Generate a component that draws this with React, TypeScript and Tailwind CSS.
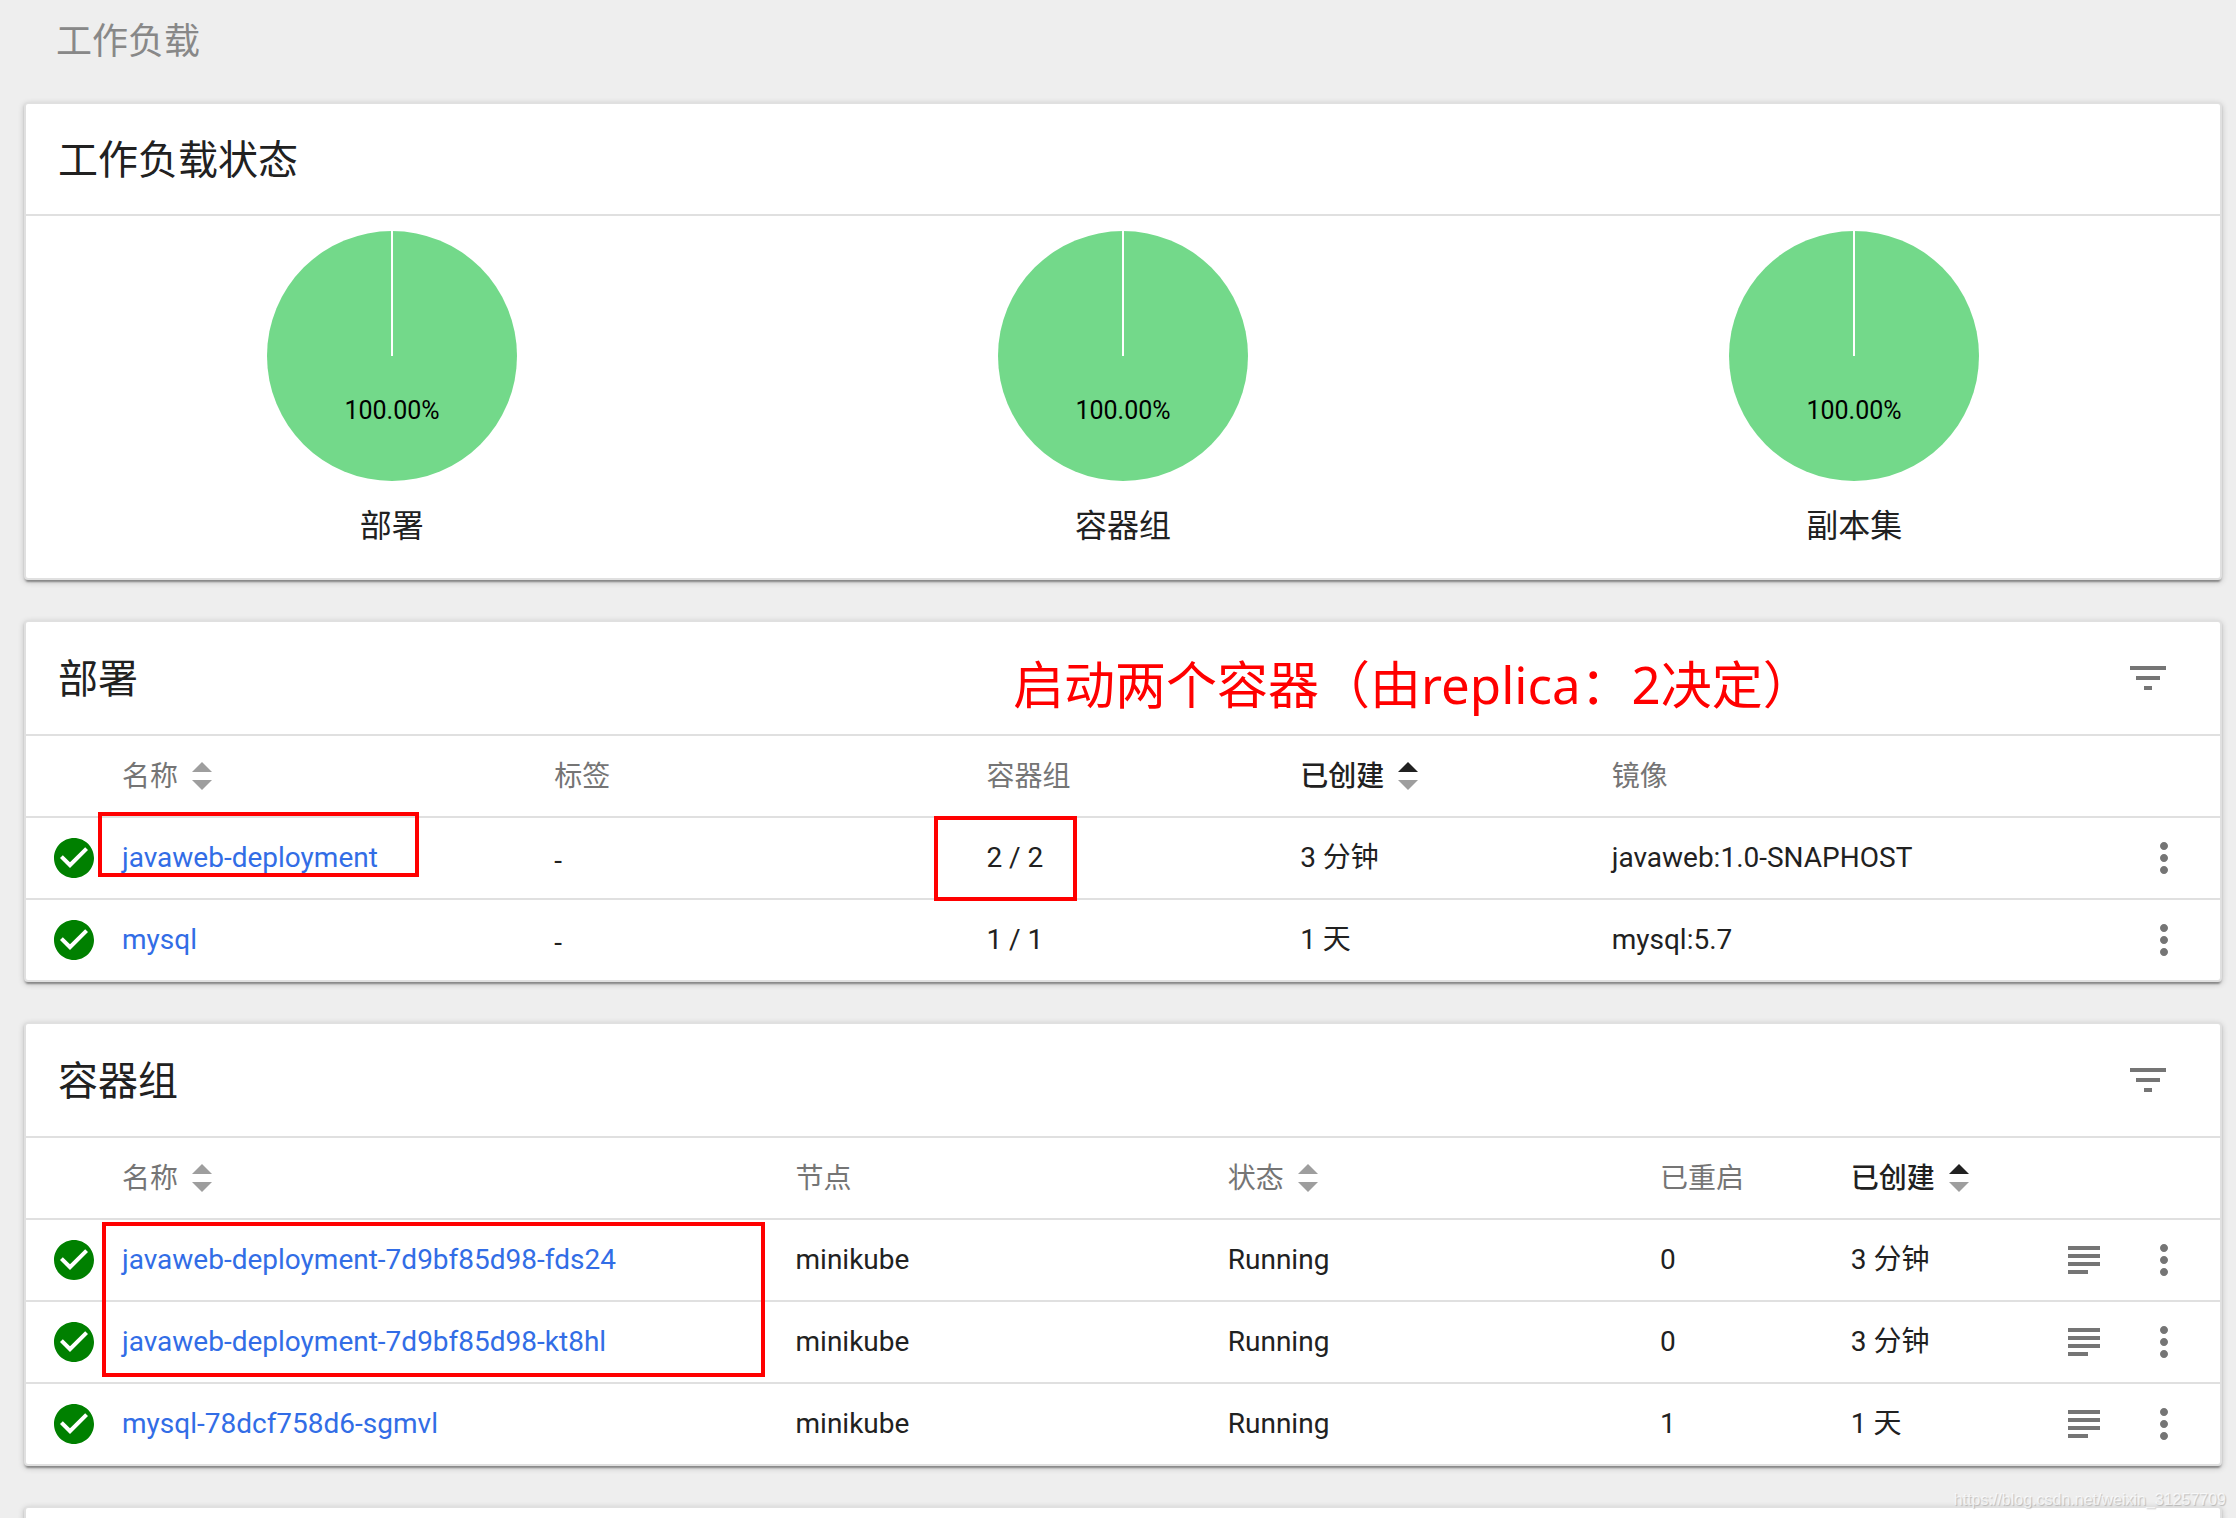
import React from 'react';
import { MdCheckCircle, MdFilterList, MdMoreVert, MdSubject } from 'react-icons/md';

const charts = ['部署', '容器组', '副本集'];

const deployments = [
  { name: 'javaweb-deployment', labels: '-', pods: '2 / 2', created: '3 分钟', image: 'javaweb:1.0-SNAPHOST' },
  { name: 'mysql', labels: '-', pods: '1 / 1', created: '1 天', image: 'mysql:5.7' },
];

const pods = [
  { name: 'javaweb-deployment-7d9bf85d98-fds24', node: 'minikube', status: 'Running', restarts: 0, created: '3 分钟' },
  { name: 'javaweb-deployment-7d9bf85d98-kt8hl', node: 'minikube', status: 'Running', restarts: 0, created: '3 分钟' },
  { name: 'mysql-78dcf758d6-sgmvl', node: 'minikube', status: 'Running', restarts: 1, created: '1 天' },
];

const Card = ({ children }: { children?: React.ReactNode }) => (
  <section className="relative min-h-16 rounded border-2 border-[#e0e0e0] bg-white shadow-[0_2px_6px_rgba(0,0,0,0.2),0_2px_2px_rgba(0,0,0,0.14),0_4px_2px_-2px_rgba(0,0,0,0.24)]">
    {children}
  </section>
);

const CardHeader = ({ title }: { title: string }) => (
  <div className="flex h-28 items-center justify-between pr-12 pl-8">
    <h2 className="pt-1 text-[40px] leading-[48px]">{title}</h2>
    <button type="button" aria-label="过滤" className="text-[#757575]">
      <MdFilterList size={48} />
    </button>
  </div>
);

const SortArrows = ({ active }: { active?: boolean }) => (
  <svg width="20" height="28" viewBox="0 0 20 28" aria-hidden="true">
    <path d="M0 10L10 0l10 10z" fill={active ? '#212121' : '#9e9e9e'} />
    <path d="M0 18l10 10 10-10z" fill="#9e9e9e" />
  </svg>
);

const Th = ({ label, width, sort, active }: {
  label: string;
  width?: string;
  sort?: boolean;
  active?: boolean;
}) => (
  <th scope="col" className={`p-0 text-left ${width ?? ''} ${active ? 'font-medium' : 'font-normal text-[#757575]'}`}>
    {sort ? (
      <button type="button" className="flex items-center gap-3.5">
        <span className="pt-0.5">{label}</span>
        <SortArrows active={active} />
      </button>
    ) : (
      <span className="block pt-0.5">{label}</span>
    )}
  </th>
);

const StatusCell = () => (
  <td className="p-0 pl-6 text-[#008000]">
    <MdCheckCircle size={48} />
  </td>
);

const NameCell = ({ name }: { name: string }) => (
  <td className="p-0">
    <a href="#" className="text-[#326de6]">{name}</a>
  </td>
);

const MenuCell = () => (
  <td className="p-0 pl-4 text-[#757575]">
    <button type="button" aria-label="操作" className="block">
      <MdMoreVert size={48} />
    </button>
  </td>
);

const Pie = ({ label }: { label: string }) => (
  <div className="flex flex-col items-center pt-[15px] pb-7">
    <svg width="250" height="250" viewBox="0 0 250 250">
      <circle cx="125" cy="125" r="125" fill="#73d98a" />
      <path d="M125 0v125" stroke="#fff" strokeWidth="2" />
      <text x="125" y="188" textAnchor="middle" fontSize="25" fill="#000">100.00%</text>
    </svg>
    <div className="mt-[21px] text-[32px] leading-[48px]">{label}</div>
  </div>
);

const rowClass = 'h-[82px] *:border-t-2 *:border-[#e0e0e0]';
const tableClass = 'w-full table-fixed border-separate border-spacing-0 text-[28px] leading-10';
const markClass = 'pointer-events-none absolute border-4 border-[#ff0000]';

const DeploymentTable = () => (
  <table className={tableClass}>
    <thead>
      <tr className={rowClass}>
        <td className="w-24" />
        <Th label="名称" width="w-[19.7%]" sort />
        <Th label="标签" width="w-[19.7%]" />
        <Th label="容器组" width="w-[14.3%]" />
        <Th label="已创建" width="w-[14.2%]" sort active />
        <Th label="镜像" />
        <td className="w-24" />
      </tr>
    </thead>
    <tbody>
      {deployments.map((d) => (
        <tr key={d.name} className={rowClass}>
          <StatusCell />
          <NameCell name={d.name} />
          <td className="p-0 pt-1.5">{d.labels}</td>
          <td className="p-0">{d.pods}</td>
          <td className="p-0">{d.created}</td>
          <td className="p-0">{d.image}</td>
          <MenuCell />
        </tr>
      ))}
    </tbody>
  </table>
);

const PodTable = () => (
  <table className={tableClass}>
    <thead>
      <tr className={rowClass}>
        <td className="w-24" />
        <Th label="名称" width="w-[30.7%]" sort />
        <Th label="节点" width="w-[19.7%]" />
        <Th label="状态" width="w-[19.7%]" sort />
        <Th label="已重启" width="w-[8.7%]" />
        <Th label="已创建" sort active />
        <td className="w-20" />
        <td className="w-24" />
      </tr>
    </thead>
    <tbody>
      {pods.map((p) => (
        <tr key={p.name} className={rowClass}>
          <StatusCell />
          <NameCell name={p.name} />
          <td className="p-0">{p.node}</td>
          <td className="p-0">{p.status}</td>
          <td className="p-0">{p.restarts}</td>
          <td className="p-0">{p.created}</td>
          <td className="p-0 pl-4 text-[#757575]">
            <button type="button" aria-label="日志" className="block">
              <MdSubject size={48} />
            </button>
          </td>
          <MenuCell />
        </tr>
      ))}
    </tbody>
  </table>
);

export default function App() {
  return (
    <div className="relative h-screen overflow-hidden bg-[#eeeeee] font-['Roboto','Noto_Sans_CJK_SC',sans-serif] text-[#212121]">
      <header className="h-[102px] px-14 pt-[18px]">
        <h1 className="text-[36px] leading-[48px] text-[#888888]">工作负载</h1>
      </header>

      <main className="flex flex-col gap-10 pr-3.5 pl-6">
        <Card>
          <h2 className="flex h-[110px] items-center px-8 pt-1 text-[40px] leading-[48px]">工作负载状态</h2>
          <div className="grid grid-cols-3 border-t-2 border-[#e0e0e0]">
            {charts.map((label) => (
              <Pie key={label} label={label} />
            ))}
          </div>
        </Card>

        <Card>
          <CardHeader title="部署" />
          <DeploymentTable />
          <p className="absolute top-[26px] left-[987px] font-['Noto_Sans','Noto_Sans_CJK_SC',sans-serif] text-[51px] leading-[72px] whitespace-nowrap text-[#ff0000]">
            启动两个容器（由replica：2决定）
          </p>
          <span className={`${markClass} top-[190px] left-[72px] h-[65px] w-[321px]`} />
          <span className={`${markClass} top-[194px] left-[908px] h-[85px] w-[143px]`} />
        </Card>

        <Card>
          <CardHeader title="容器组" />
          <PodTable />
          <span className={`${markClass} top-[198px] left-[76px] h-[155px] w-[663px]`} />
        </Card>

        <Card />
      </main>

      <div className="absolute right-2.5 bottom-1.5 font-['Liberation_Sans',Arial,sans-serif] text-[16px] leading-6 text-white/70 [text-shadow:1px_1px_1px_rgba(0,0,0,0.2)]">
        https://blog.csdn.net/weixin_31257709
      </div>
    </div>
  );
}
